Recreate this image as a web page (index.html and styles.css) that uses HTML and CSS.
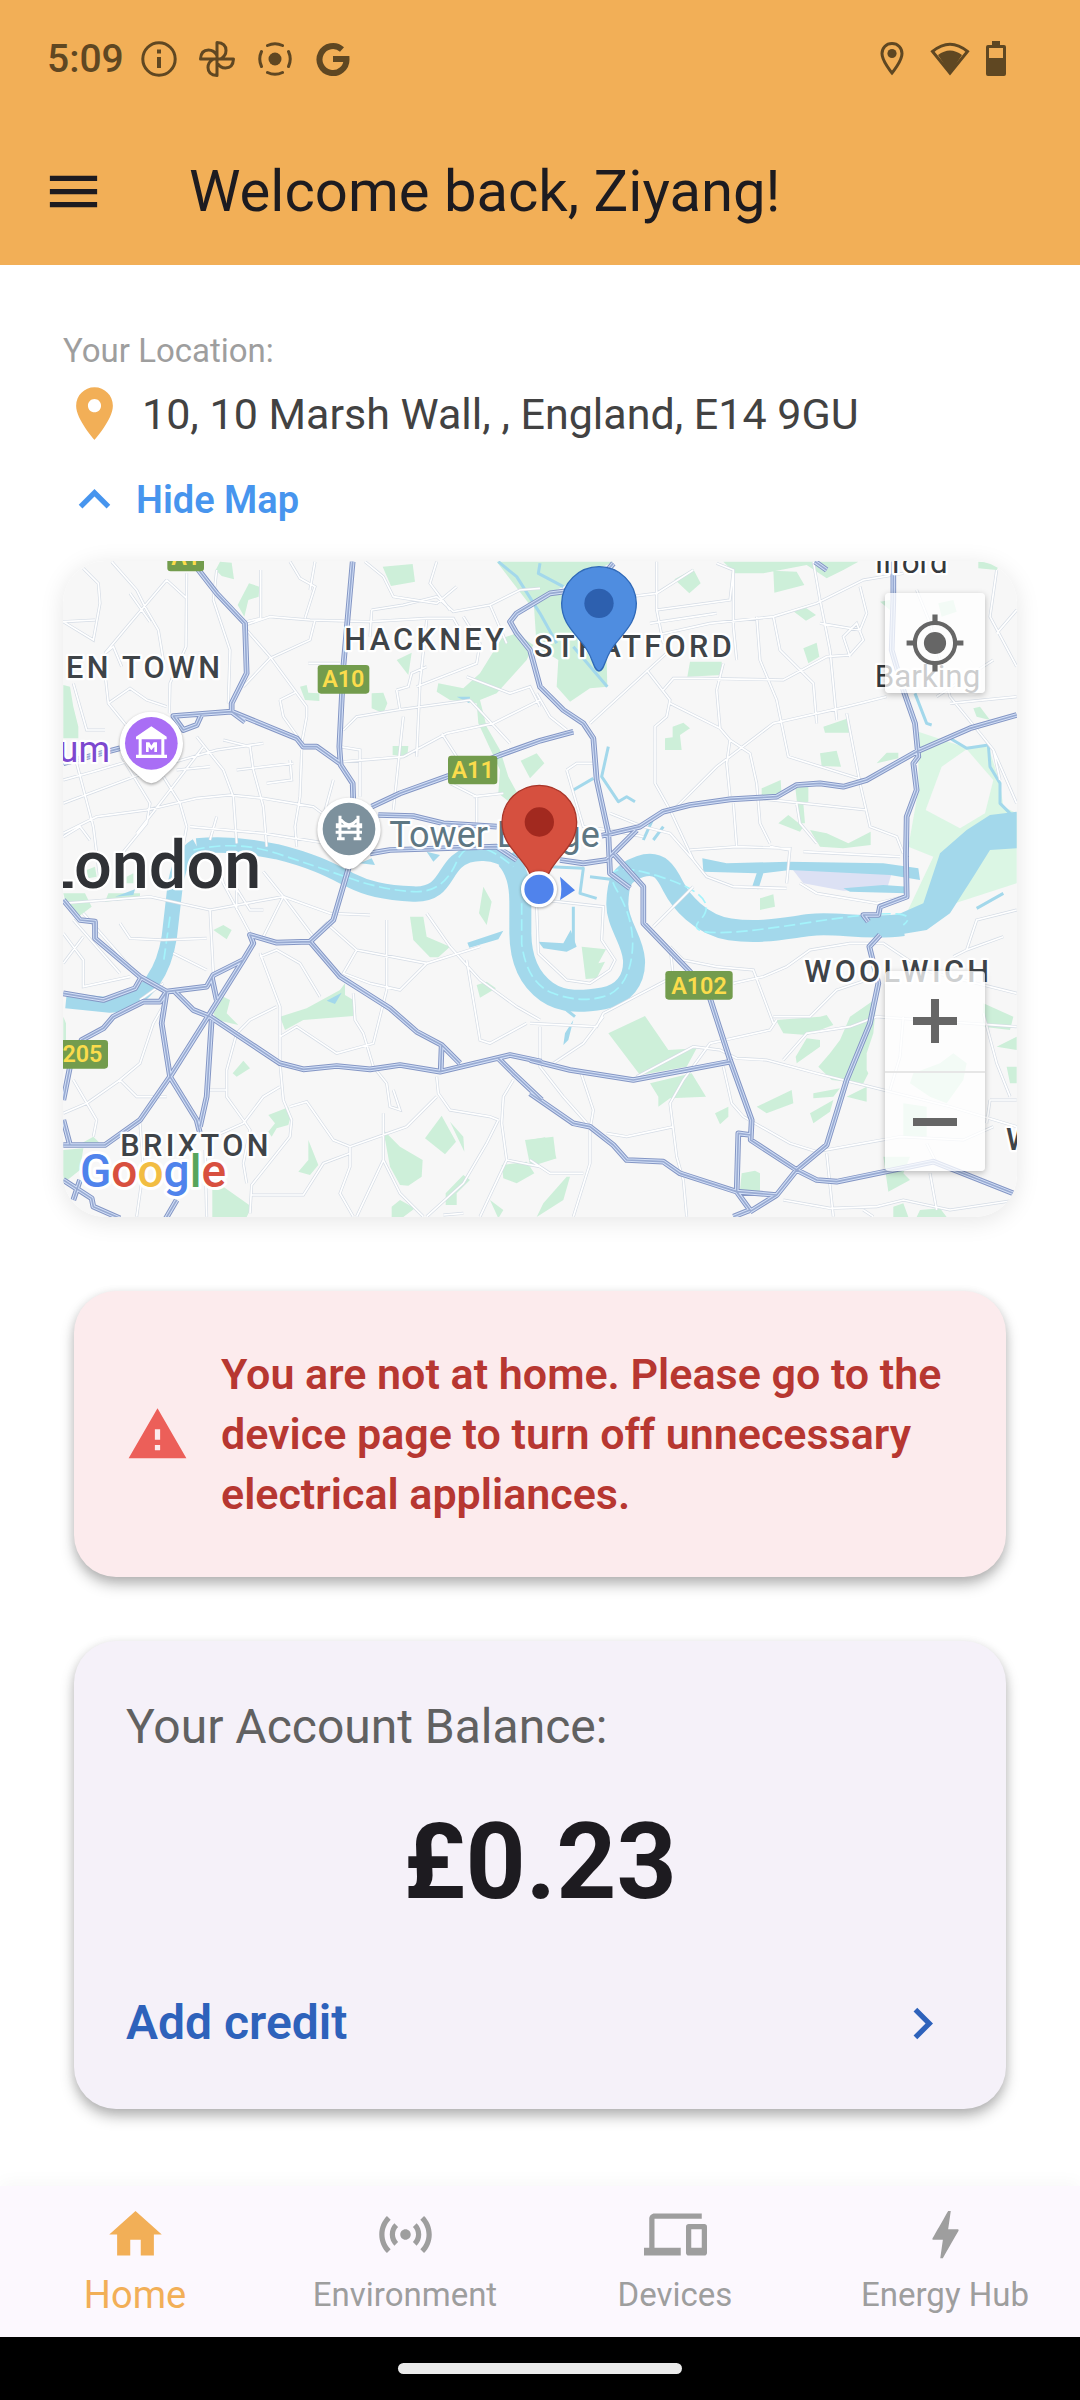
FILE: index.html
```html
<!DOCTYPE html>
<html lang="en">
<head>
<meta charset="utf-8">
<meta name="viewport" content="width=device-width, initial-scale=1">
<title>Home</title>
<link rel="stylesheet" href="styles.css">
</head>
<body>
<div class="app">
  <header class="header">
    <div class="status">
      <span class="clock">5:09</span>
      <div class="status-left">
        <svg width="36" height="36" viewBox="0 0 36 36" aria-hidden="true"><circle cx="18" cy="18" r="16.2" fill="none" stroke="currentColor" stroke-width="3"/><path d="M16 8.500h4v4h-4zM16 16h4v11h-4z" fill="currentColor"/></svg>
        <svg width="36" height="36" viewBox="0 0 36 36" fill="none" stroke="currentColor" stroke-width="3" stroke-linejoin="round" aria-hidden="true"><path d="M18 18V1.500Q27 2 27 9.500Q27 15 21.500 18M18 18h16.500Q34 27 26.500 27Q21 27 18 21.500M18 18v16.500Q9 34 9 26.500Q9 21 14.500 18M18 18H1.500Q2 9 9.500 9Q15 9 18 14.500"/></svg>
        <svg width="36" height="36" viewBox="0 0 36 36" aria-hidden="true"><circle cx="18" cy="18" r="6.500" fill="currentColor"/><g fill="none" stroke="currentColor" stroke-width="3" stroke-linecap="round"><path d="M10.500 4.500Q18 1 25.500 4.500M10.500 31.500Q18 35 25.500 31.500M4.500 10.500Q1 18 4.500 25.500M31.500 10.500Q35 18 31.500 25.500"/></g></svg>
        <svg width="36" height="36" viewBox="0 0 36 36" aria-hidden="true"><path d="M27 8.500A13.500 13.500 0 1 0 31.500 18H18" fill="none" stroke="currentColor" stroke-width="6"/></svg>
      </div>
      <div class="status-right">
        <svg class="status-pin" width="24" height="36" viewBox="0 0 24 36" aria-hidden="true"><path d="M12 2.500c-6 0-10 4.500-10 10C2 20 12 32 12 32s10-12 10-19.500c0-5.500-4-10-10-10z" fill="none" stroke="currentColor" stroke-width="3"/><circle cx="12" cy="12.500" r="4.600" fill="currentColor"/></svg>
        <svg width="40" height="36" viewBox="0 0 40 36" aria-hidden="true"><path d="M2.500 10.500Q20-4 37.500 10.500L20 32z" fill="none" stroke="currentColor" stroke-width="3"/><path d="M8 14Q20 5 32 14L20 32z" fill="currentColor"/></svg>
        <svg width="20" height="36" viewBox="0 0 20 36" aria-hidden="true"><path fill="currentColor" fill-rule="evenodd" d="M6 0h8v4h4q2 0 2 2v27q0 2-2 2H2q-2 0-2-2V6q0-2 2-2h4zM3 7v10h14V7z"/></svg>
      </div>
    </div>
    <div class="appbar">
      <button class="icon-button" type="button" aria-label="Menu"><svg class="icon" viewBox="0 0 24 24"><path d="M3 18h18v-2H3v2zm0-5h18v-2H3v2zm0-7v2h18V6H3z"/></svg></button>
      <h1 class="title">Welcome back, Ziyang!</h1>
    </div>
  </header>

  <main class="content">
    <section class="location">
      <p class="caption">Your Location:</p>
      <p class="address"><svg class="icon pin" viewBox="0 0 24 24" aria-hidden="true"><path d="M12 2C8.130 2 5 5.130 5 9c0 5.250 7 13 7 13s7-7.750 7-13c0-3.870-3.130-7-7-7zm0 9.500c-1.380 0-2.500-1.120-2.500-2.500s1.120-2.500 2.500-2.500 2.500 1.120 2.500 2.500-1.120 2.500-2.500 2.500z"/></svg>10, 10 Marsh Wall, , England, E14 9GU</p>
      <button class="toggle" type="button"><svg class="icon" viewBox="0 0 24 24" aria-hidden="true"><path d="M12 8l-6 6 1.410 1.410L12 10.830l4.590 4.580L18 14z"/></svg>Hide Map</button>
      <div class="map">
        <svg class="map-art" viewBox="39 33 2862 1968" role="img" aria-label="Map of London">
          <defs>
            <g id="minor">
              <path d="M185 35L260 120L290 180L325 240L340 330M100 55L145 100L150 160L130 270L40 215L135 210M350 90L240 220L165 310L190 290L215 350M350 90L410 145M410 70L408 290L360 400L358 490M240 130L300 215M500 60L490 150L540 300L535 460M632 60V205L590 215M585 225L660 200L780 210L960 215L1130 205L1210 205L1230 240M590 240L660 320L770 470L770 500L755 580M795 210L780 270L660 325L580 410M720 35L750 85L795 110L765 205M795 35L780 120M165 370L175 460L240 540M175 460L240 415L290 450L350 470M70 400L110 540L165 540M690 450L700 500L750 570M775 340H870M690 450L740 425M40 760L200 700L360 640L500 600L640 580M40 690L130 665L215 640L290 610M40 850L140 800L290 780L440 745L540 735L640 745L790 770L830 800M80 640L130 830L150 990M215 620L300 760L290 820L200 930M340 680L390 760L410 830L390 940M440 560L520 660L550 740L560 880M520 570L600 590L610 660L640 770L650 890M460 590L330 760L260 850M380 660L480 650M720 630L725 690L650 700M755 600L750 740L735 830L740 890M40 860L90 830L120 870M420 830L640 850L830 880M500 800L480 870M560 660L730 640M850 690L820 800M880 635L1060 620L1190 550L1330 520L1470 450M880 540L920 500L1040 480L1260 450M965 180L1060 165L1160 140L1210 185L1320 165L1410 120L1470 115M965 180L960 260M945 35L1000 80L1030 140L1160 160L1220 110M1160 35L1140 100L1200 180M1320 165L1370 280M1130 210L1110 400L1100 620M1240 200L1290 280L1280 340L1100 410M1040 420L1075 410L1085 370L1130 350M1040 420L1050 480M870 590L930 600L930 740M1060 500L1030 780M1175 550L1220 620M1250 380L1380 430L1440 410L1470 470M1260 450L1380 580M1200 700L1280 740L1280 820M1270 740L1360 730M640 965L700 1040L640 1160M40 1060L300 1040L480 1080L700 1040L840 1090L960 1095"/>
              <path d="M40 1150L100 1230L100 1310L240 1280M70 1110L210 1270M100 1090L240 1250M40 1240L100 1160M210 1120L240 1165L340 1170L470 1165M480 1080L490 1270M370 1210L470 1260M350 1350L310 1420L270 1540L210 1590L110 1660L40 1690M270 1350L340 1300M630 1210L690 1370L690 1540L700 1650L725 1710L720 1760L605 1905L600 1990M630 1220L680 1200L750 1240L810 1340M700 1040L790 1160L830 1120L920 1200L1130 1240L1290 1190M920 1200L880 1270L960 1300L1050 1320L1130 1240M1130 1090L1200 1190L1290 1290L1400 1370L1470 1410M1250 1230L1290 1470L1320 1480L1430 1420M1010 1110L1010 1320L970 1480L860 1510L830 1490L740 1430L690 1460M910 1330L915 1410L940 1450L970 1550L1010 1600L1020 1670L1050 1680L1030 1620M1160 1580L1165 1630L1200 1680L1320 1700L1345 1710M1160 1640L1070 1730L900 1790L850 1770L770 1655L720 1670M900 1790L900 1850L870 1930L910 2000M900 1810L820 1840L760 1935L605 1935M680 1370L600 1410L560 1450L530 1560L530 1640L580 1710L600 1740L580 1840L590 1900M690 1610L640 1640L580 1720L490 1760M480 1620H530M70 1590L140 1710L130 1760M210 1590L260 1640L350 1640M270 1720L280 1860L260 2000M1000 1690L1000 1830L920 2000M1000 1830L1050 1930L1120 2000M1390 1590L1360 1640L1355 1720L1370 1830L1290 2000M1345 1710L1310 1780L1240 1900L1130 2000M1370 1830L1470 1850M500 930L520 1000L600 1150M560 960V1080M550 1000L600 1080L640 1080M465 1800L470 2000M1240 1990L1180 1995"/>
              <path d="M1820 35L1820 180L1840 280M1820 180L2040 150L2050 60L2000 40M1740 140L1820 130L1930 60M2050 60L2050 230L2060 330M1800 260L1980 220L2170 200L2300 160L2440 90L2560 70M1800 220L2000 190M2290 35L2310 150L2340 300L2360 510M2120 200L2130 330L2180 450L2215 620L2440 690M2170 200L2190 300L2290 400L2300 520M1840 420L1870 385H1950L2200 390L2330 320L2400 315L2440 270L2420 220L2380 260L2400 320M1790 360L1860 450L1850 500L1815 530L1815 700L1860 780L1930 930L1970 980L2050 1010L2210 1015M1860 460L2010 535L2000 420L2020 340M2010 535L2040 570L2100 610L2120 700L2130 820L2160 880M1620 520L1860 300M2390 490L2430 700L2460 830L2540 860L2560 910M1870 780L2000 650L2170 520L2390 470L2510 440M2040 570L2030 640L2040 740M1550 660L1580 640L1640 640M1550 660L1600 830L1680 840L1780 860M1680 790L1780 830L1860 850L1930 930M2050 760L2060 890M2120 745L2450 780M2240 760L2250 820L2300 880M1920 900L2060 890L2220 895L2210 1000M2260 905L2550 920M2160 890L2220 900M2310 220L2430 240L2450 190L2430 110M2600 120L2640 220L2700 440L2790 550L2830 600L2900 760M2700 460L2900 440M2830 600L2850 690M2840 60L2820 200L2900 350M2660 440L2830 330M2840 250L2900 180M1460 430L1500 500L1550 540"/>
              <path d="M1460 1070L1465 1210L1550 1290L1620 1300L1680 1260L1695 1230L1655 1170L1660 1070L1480 1050M1810 1130L1930 1010M1860 1190L1900 1230L2000 1250L2110 1260L2170 1420M1860 1190L1870 1280L1660 1390L1640 1430L1440 1420M2050 1300L2140 1280L2210 1250L2280 1200L2400 1180L2500 1180L2620 1260L2900 1330M2170 1400H2280L2360 1320L2450 1290M2200 1530L2270 1450L2400 1430L2480 1400L2900 1430M2180 1410L2160 1440L1980 1480L1900 1590L1860 1660L1880 1820L1900 1890L1910 2000M1760 1580L1930 1490L2010 1500L2060 1525L2150 1530L2300 1570L2500 1620L2700 1670L2900 1730M2020 1550L2045 1660L2080 1700L2220 1780L2300 1805L2550 1760L2740 1770L2830 1730M2330 1810L2350 2000M2200 1950L2340 1975L2480 1970L2560 1950L2700 1980L2900 1950M2640 1870L2660 1980M1470 1430V1550L1540 1640L1620 1730L1620 1840L1570 2000M1510 1540L1600 1480L1660 1400M1590 1560L1630 1680L1620 1740M1670 1750L1730 1760L1870 1730M1440 1830L1500 1870H1600M2250 1000L2300 1030L2480 1060L2560 1040M2710 1220L2750 1200L2780 1110L2900 1080M2750 1200L2860 1160M2800 1390L2840 1540L2880 1640M2820 1650H2900M2820 1650L2810 1720M2560 1400L2550 1520L2520 1620M2630 1780L2660 1840M2440 1980L2470 2000"/>
            </g>
            <g id="major">
              <path d="M430 40L500 130L585 220L590 370L545 460V485L370 498L400 540L440 525L455 492M545 485L585 515M545 485L740 565L760 590L800 590L870 640M908 35L880 350L868 590L872 645L908 700L910 760M965 770L1050 730L1195 678L1350 615L1470 572L1570 545M985 795L1090 798L1180 820L1340 830M960 910L1020 900L1340 890L1400 930M1690 40L1640 100L1540 125L1500 130L1400 190L1380 215L1400 250L1440 300L1470 410L1540 480L1600 520L1630 565L1640 690L1675 850L1680 970L1740 1015M1655 857L1770 830L1840 785L1920 765L2040 748L2180 740L2240 705L2310 700L2380 710L2450 690L2600 605L2760 535L2900 495M1530 930L1600 940L1670 930L1760 840M1690 910L1780 1010V1120L1920 1265L1980 1345L2040 1530L2105 1710L2102 1770L2240 1860L2300 1890L2360 1895L2650 1835L2890 1930M2530 35V150L2525 300L2560 420L2595 520L2605 620L2590 640L2600 720L2570 800L2568 920L2570 1040L2490 1070L2485 1095L2440 1095L2455 1115M2295 35L2330 60M2490 1155L2458 1190L2485 1300L2460 1420L2390 1590L2330 1785L2240 1860L2180 1935L2060 1925L1890 1870L1840 1835L1730 1830L1690 1785L1620 1730L1570 1720L1440 1630M1440 1530L1560 1560L1750 1590L2040 1535M2060 1925L2065 1750L2102 1755M2060 1925L2100 1980L2050 2000M2100 1985L2180 1935"/>
              <path d="M40 1050L90 1110L135 1115V1165L270 1280L350 1325L470 1310L490 1275L580 1230L610 1180L600 1155L680 1178L780 1175L850 1110L897 950M40 1330L160 1350L255 1315L275 1280M350 1325L330 1355L280 1355L190 1400L160 1435L95 1470L60 1550L40 1650M350 1325L335 1420L360 1580L440 1710L450 1750M375 1325L430 1380L480 1400L690 1540L760 1558L860 1548L960 1558L1050 1545L1170 1565L1380 1515L1475 1535M580 1230L480 1390L360 1580L270 1710L165 1785H40M485 1280L500 1350M485 1410L470 1640L450 1730M780 1175L870 1280L1020 1375L1100 1445L1175 1485L1230 1540M1175 1485L1172 1565M1345 1525L1390 1570L1475 1650M40 1710L60 1785M40 1890L125 1945L130 1970L210 2005M70 1950L90 1890M380 1950L345 2010M40 640L210 595"/>
            </g>
          </defs>
          <rect class="land" x="39" y="33" width="2862" height="1968"/>
          <g class="park">
            <path d="M497 60L510 35L545 38L552 88L515 78zM597 100L628 110L626 140L595 150L583 200L563 165zM998 50L1088 42L1095 95L1023 108zM1340 35H1690L1640 60L1560 100L1500 130L1440 165zM1355 265L1400 250L1450 285L1430 330L1340 430L1290 450L1310 530L1350 600L1375 680L1405 735L1390 765L1345 730L1350 660L1285 520L1280 460L1200 450L1160 425L1165 400L1240 415L1290 370zM750 410L770 405L775 428L808 430V453L765 450zM965 430L1000 428L1012 460L1000 490L965 475zM1028 588H1075L1072 620L1028 615zM1412 632L1460 610L1483 640L1440 685zM40 405L60 410L70 470L85 530V565H40zM1040 330L1085 308L1075 375zM110 960L135 950L140 980L115 985zM230 980L250 970V1000H230z"/>
            <path d="M1450 140L1530 120L1670 330L1672 410L1620 415L1560 455L1520 410L1525 330L1460 290zM1873 88L1930 58L1952 100L1918 130zM2020 35H2425L2380 60L2330 85L2270 45L2140 70H2055zM2170 62L2240 65L2263 105L2173 128zM2232 185L2260 168L2298 195L2268 212zM2260 295L2300 278L2308 320L2275 340zM1920 335H2015V375L1912 380zM1868 530L1900 518L1920 535L1890 555L1895 600H1845V565L1868 562zM2310 610L2360 602L2373 650L2315 648zM2320 530L2395 505L2400 548H2325zM2135 715L2192 690L2195 740H2135zM2235 705H2275V755L2260 760L2265 820H2248zM2185 820L2215 795L2260 830L2250 845zM2280 840L2330 850L2395 880L2462 845V885L2380 895L2310 890zM2480 640L2510 608H2545V625zM2785 35L2850 40L2840 60L2785 55zM2770 475L2790 470L2820 510L2780 500zM2490 155L2520 150V180zM2665 160L2710 150L2720 185L2675 200z"/>
            <path d="M40 1030H105L125 1070L85 1100L50 1070zM175 1030H270V1045L165 1055zM490 1140L520 1125L545 1140L530 1168zM1080 1100H1120L1130 1160L1200 1190L1165 1222L1140 1222L1090 1170zM1300 1010L1325 1055L1310 1125L1287 1090zM1280 1305L1310 1295L1338 1315L1290 1343zM690 1400L770 1375L870 1320L885 1300V1335L910 1350V1398L760 1410L705 1440zM520 1340L540 1350L530 1390L565 1425L500 1410L490 1390zM548 1570L580 1532L600 1555L560 1580zM655 1695L715 1672L722 1700L715 1725L680 1735L665 1760L655 1745L675 1720zM775 1770L805 1845L780 1875L745 1865L775 1830zM1000 1740L1050 1790L1118 1830L1115 1880L1075 1907L1050 1905L1020 1850zM1175 1697L1218 1775L1185 1813L1125 1765zM1200 1715L1240 1760L1243 1805zM1240 1875L1260 1890L1220 1930V1965H1187V1930zM1355 1845L1430 1835L1453 1870L1400 1900L1360 1885zM1320 1950L1360 1980L1345 2005zM1025 1970L1050 1950L1095 1975L1060 2001H1025zM487 1915L520 1910L605 1970L590 2001H487zM40 1800L100 1795L90 1860L40 1900zM40 1400L48 1420V1470H40zM95 1780L130 1760L150 1780zM1425 1770L1510 1760L1518 1825L1440 1845z"/>
            <path d="M1595 1190L1668 1198L1645 1240L1665 1235L1640 1285L1607 1287zM1675 1450L1785 1398L1855 1500L1940 1495L1910 1550L1770 1575zM1800 1600L1925 1570L1968 1640L1860 1645L1825 1670V1640zM2130 1045L2170 1033L2175 1070L2130 1080zM2178 1410L2310 1400L2330 1395L2350 1425L2270 1455L2200 1450zM2400 1400L2480 1345L2470 1450L2450 1510V1560L2455 1570L2440 1600L2345 1590L2305 1550L2340 1510L2370 1470zM2270 1465L2310 1470V1490L2240 1540L2237 1520zM2120 1670L2225 1620L2230 1660L2150 1690zM1995 1690L2035 1670V1700L2010 1723zM2075 1870L2115 1862L2130 1870V1925L2070 1920zM2290 1630L2370 1615L2350 1640L2290 1645zM2280 1690L2350 1650L2340 1685L2290 1720zM2390 1640L2450 1610V1655zM2670 1540L2710 1510L2750 1540L2740 1590L2690 1660L2640 1640L2580 1600L2590 1570zM2560 1660L2630 1670V1760H2560zM2500 1820H2580L2560 1870L2580 1890L2515 1925zM2800 1360L2890 1400L2880 1440L2800 1430zM2870 1550H2900V1600H2880zM2840 1490L2900 1460V1500zM1440 1770L1485 1762L1520 1825L1440 1850zM2530 1970L2560 1960L2575 2001H2530zM2610 1980L2670 1975L2690 2001H2600zM1550 1880H1560L1540 1950L1460 2001L1480 1960z"/>
          </g>
          <path class="marsh" d="M2605 545L2740 590H2815L2850 700L2860 770L2900 790V1000L2560 1110L2650 920L2575 890L2605 720z"/>
          <path class="land" d="M2675 650L2750 598L2830 690L2805 790L2730 835L2627 780z"/>
          <path class="industrial" d="M2225 955L2525 970L2510 1020L2380 1022L2260 1000z"/>
          <g class="water">
            <path d="M2670 910L2750 840L2820 795L2900 785V895L2820 900L2770 980L2700 1090L2630 1140L2540 1155V1095L2620 1060zM1957 925L2030 940L2215 935L2500 940L2605 955L2610 990L2520 975L2220 960L2140 970L2125 1018L2105 1015L2120 970L1960 965zM2380 1015L2500 1005L2575 1010L2570 1030L2400 1025zM1252 1178L1360 1142L1345 1168L1258 1193zM1220 440H1260L1258 460zM830 1352L875 1328L855 1362zM195 1040L255 1018L250 1035zM1130 905L1170 915L1150 935zM930 940L965 925L975 945zM1465 1175L1540 1180L1562 1140L1580 1190L1550 1205L1480 1195zM1545 1450L1570 1410L1555 1470L1540 1485z"/>
            <g class="channel">
              <path class="river" d="M440 888C520 880 600 888 680 905C800 935 850 965 900 990S1000 1028 1090 1032S1180 970 1220 935S1340 900 1390 945"/>
              <path class="river bend" d="M1370 925Q1412 970 1411 1060V1150C1412 1230 1440 1290 1490 1325S1600 1355 1660 1345S1755 1290 1752 1230S1700 1120 1702 1060S1710 970 1770 950S1850 970 1870 1010S1950 1125 2040 1138S2200 1135 2280 1125S2440 1140 2560 1125"/>
              <path class="river" d="M440 888Q385 920 374 1020L358 1160Q345 1240 310 1290Q260 1365 180 1365L48 1352"/>
              <path class="canal" d="M1345 35L1400 80L1470 190L1520 280M1470 40L1465 70L1540 110M1570 290L1672 410M2595 430L2630 520L2645 525M2700 565L2750 595L2815 585L2820 650L2850 700V760L2890 800M1675 590L1655 680L1705 755L1730 740L1755 755M1570 720L1630 685M1780 870L1808 808M1810 870L1840 830M1500 950L1600 955L1590 1030L1640 1045M1570 1070V1180M1550 1380L1575 1400M2780 1075L2860 1030M1620 980L1700 990"/>
            </g>
          </g>
          <path class="ferry" d="M430 900Q560 870 680 910T900 985T1090 1025T1220 935T1390 950M1415 1060V1180Q1430 1300 1510 1330T1660 1340T1745 1220T1700 1020T1830 980T1950 1110T2260 1120T2560 1125M360 1100L340 1240"/>
          <use href="#minor" class="minor-edge"/><use href="#minor" class="minor-fill"/>
          <use href="#major" class="major-edge"/><use href="#major" class="major-fill"/><use href="#major" class="major-line"/>

          <g class="shield">
            <rect x="352" y="-22" width="110" height="86" rx="10"/><rect x="803" y="345" width="155" height="86" rx="10"/><rect x="1194" y="617" width="148" height="86" rx="10"/><rect x="1846" y="1263" width="202" height="86" rx="10"/><rect x="0" y="1470" width="174" height="86" rx="10"/>
          </g>
          <g class="shield-text">
            <text x="407" y="45">A1</text><text x="880" y="412">A10</text><text x="1268" y="684">A11</text><text x="1947" y="1331">A102</text><text x="74" y="1537">A205</text>
          </g>
          <g class="place">
            <text x="48" y="384">EN TOWN</text><text x="883" y="299">HACKNEY</text><text x="1452" y="320">STRATFORD</text><text x="2263" y="1297">WOOLWICH</text><text x="211" y="1817">BRIXTON</text><text x="2868" y="1800">W</text>
          </g>
          <g class="town"><text x="2474" y="68">Ilford</text><text x="2474" y="410">Barking</text></g>
          <text class="city" x="634" y="1014">London</text>
          <text class="museum" x="180" y="635">Museum</text>
          <text class="bridge" x="1018" y="892">Tower Bridge</text>

          <g class="poi">
            <path class="poi-body" d="M304 485A95 95 0 0 0 209 580C209 628 240 655 280 690Q304 710 328 690C368 655 399 628 399 580A95 95 0 0 0 304 485z"/>
            <circle cx="304" cy="580" r="79" fill="#a96ef5"/>
            <path fill="#fff" fill-rule="evenodd" d="M304 529L350 560V568H343V614H351V624H258V614H266V568H258V560zM275 568V614H334V568zM288 606V577H298L304 587L311 577H321V606H313V590L304 601L296 590V606z"/>
            <path class="poi-body" d="M897 743A95 95 0 0 0 802 838C802 886 833 913 873 948Q897 968 921 948C961 913 992 886 992 838A95 95 0 0 0 897 743z"/>
            <circle cx="897" cy="837" r="79" fill="#7d919d"/>
            <path d="M870 797V865M924 797V865M861 866H884M911 866H934M857 847H936M870 806Q897 842 924 806M897 825V838M862 820V835M932 820V835M870 828H924" fill="none" stroke="#fff" stroke-width="9"/>
          </g>
          <g transform="translate(1647 160)"><path d="M0-110A112 112 0 0 0-112 0C-112 65-66 92-36 140C-16 172-15 203 0 203S16 172 36 140C66 92 112 65 112 0A112 112 0 0 0 0-110z" fill="#4f8de0" stroke="#2f69b8" stroke-width="4"/><circle r="44" fill="#2d60af"/></g>
          <g transform="translate(1468 816)"><path d="M0-110A112 112 0 0 0-112 0C-112 65-66 92-36 140C-16 172-15 203 0 203S16 172 36 140C66 92 112 65 112 0A112 112 0 0 0 0-110z" fill="#d6503f" stroke="#a8362a" stroke-width="4"/><circle r="44" fill="#a2291f"/></g>
          <path d="M1530 980L1575 1021L1530 1050Q1538 1020 1530 980z" fill="#5083ec"/>
          <circle class="me" cx="1467" cy="1018" r="49"/>
          <text class="brand" x="90" y="1910"><tspan fill="#4f83ec">G</tspan><tspan fill="#d8503f">o</tspan><tspan fill="#f2bd42">o</tspan><tspan fill="#4f83ec">g</tspan><tspan fill="#58a55c">l</tspan><tspan fill="#d8503f">e</tspan></text>
        </svg>
        <button class="map-button locate" type="button" aria-label="My location"><svg viewBox="0 0 24 24" width="62" height="62"><path fill="currentColor" d="M11 1h2v4h-2zM11 19h2v4h-2zM1 11h4v2H1zM19 11h4v2h-4z"/><circle cx="12" cy="12" r="7.800" fill="none" stroke="currentColor" stroke-width="1.600"/><circle cx="12" cy="12" r="4.300" fill="currentColor"/></svg></button>
        <div class="zoom">
          <button class="zoom-button" type="button" aria-label="Zoom in"><svg viewBox="0 0 44 44" width="44" height="44"><path fill="currentColor" d="M18 0h8v18h18v8H26v18h-8V26H0v-8h18z"/></svg></button>
          <button class="zoom-button" type="button" aria-label="Zoom out"><svg viewBox="0 0 44 44" width="44" height="44"><path fill="currentColor" d="M0 18h44v8H0z"/></svg></button>
        </div>
      </div>
    </section>

    <section class="card alert" role="alert">
      <svg class="icon" viewBox="0 0 24 24" aria-hidden="true"><path d="M1 21h22L12 2 1 21zm12-3h-2v-2h2v2zm0-4h-2v-4h2v4z"/></svg>
      <p>You are not at home. Please go to the device page to turn off unnecessary electrical appliances.</p>
    </section>

    <section class="card balance">
      <h2 class="balance-title">Your Account Balance:</h2>
      <p class="amount">£0.23</p>
      <a class="credit" href="#credit">Add credit<svg class="icon" viewBox="0 0 24 24" aria-hidden="true"><path d="M10 6L8.590 7.410 13.170 12l-4.580 4.590L10 18l6-6z"/></svg></a>
    </section>
  </main>

  <nav class="nav">
    <a class="tab active" href="#home" aria-current="page"><svg class="icon" viewBox="0 0 24 24" aria-hidden="true"><path d="M10 20v-6h4v6h5v-8h3L12 3 2 12h3v8z"/></svg>Home</a>
    <a class="tab" href="#environment"><svg class="icon" viewBox="0 0 24 24" aria-hidden="true"><path d="M7.760 16.240C6.670 15.160 6 13.660 6 12s.67-3.160 1.760-4.240l1.420 1.420C8.450 9.900 8 10.900 8 12c0 1.100.45 2.100 1.170 2.830l-1.410 1.410zm8.480 0C17.330 15.160 18 13.660 18 12s-.67-3.160-1.760-4.240l-1.420 1.420C15.550 9.900 16 10.900 16 12c0 1.100-.45 2.100-1.170 2.830l1.410 1.410zM12 10c-1.100 0-2 .9-2 2s.9 2 2 2 2-.9 2-2-.9-2-2-2zm8 2c0 2.210-.9 4.210-2.350 5.650l1.420 1.420C20.880 17.260 22 14.760 22 12s-1.120-5.260-2.930-7.070l-1.420 1.420C19.100 7.790 20 9.790 20 12zM6.350 6.350L4.930 4.930C3.120 6.740 2 9.240 2 12s1.120 5.260 2.930 7.070l1.420-1.420C4.900 16.210 4 14.210 4 12s.9-4.210 2.350-5.650z"/></svg>Environment</a>
    <a class="tab" href="#devices"><svg class="icon" viewBox="0 0 24 24" aria-hidden="true"><path d="M4 6h18V4H4c-1.100 0-2 .9-2 2v11H0v3h14v-3H4V6zm19 2h-6c-.55 0-1 .45-1 1v10c0 .55.45 1 1 1h6c.55 0 1-.45 1-1V9c0-.55-.45-1-1-1zm-1 9h-4v-7h4v7z"/></svg>Devices</a>
    <a class="tab" href="#energy"><svg class="icon" viewBox="0 0 24 24" aria-hidden="true"><path d="M11 21h-1l1-7H7.500c-.88 0-.33-.75-.31-.78C8.480 10.940 10.420 7.540 13.010 3h1l-1 7h3.510c.4 0 .62.19.4.66C12.970 17.550 11 21 11 21z"/></svg>Energy Hub</a>
  </nav>
  <div class="gesture"><span class="handle"></span></div>
</div>
</body>
</html>
```
FILE: styles.css
```css
* { box-sizing: border-box; }
body, h1, h2, p { margin: 0; }
body {
  font-family: Roboto, "Liberation Sans", sans-serif;
  font-weight: 400;
  color: #1d1b20;
  background: #fff;
}
button { border: 0; padding: 0; background: none; font: inherit; color: inherit; cursor: pointer; }
a { text-decoration: none; color: inherit; }
svg { display: block; flex: none; }
.icon { width: 63px; height: 63px; fill: currentColor; }

.app { min-height: 100vh; display: flex; flex-direction: column; }

/* Status bar and app bar */
.header { background: #f2af57; }
.status {
  display: flex;
  align-items: center;
  height: 118px;
  padding: 0 74px 0 47px;
  color: #5f4722;
}
.clock { font-size: 39px; line-height: 48px; font-weight: 500; }
.status-left { display: flex; gap: 22px; margin-left: 17px; }
.status-right { display: flex; gap: 16px; margin-left: auto; }
.status-pin { margin-right: 10px; }
.appbar { display: flex; align-items: center; gap: 84px; height: 147px; padding: 0 42px; }
.title { margin-bottom: 2px; font-size: 58px; line-height: 68px; font-weight: 400; }

/* Location */
.content { flex: 1; padding: 62px 74px 76px; }
.location { margin: 0 -11px 74px; }
.caption { font-size: 33px; line-height: 48px; color: #9e9e9e; }
.address {
  display: flex;
  align-items: center;
  gap: 16px;
  margin-top: 7px;
  font-size: 43px;
  line-height: 60px;
  color: #424242;
}
.pin { color: #f2af57; }
.toggle {
  display: flex;
  align-items: center;
  gap: 10px;
  margin: 23px 0 30px;
  font-size: 38px;
  line-height: 48px;
  font-weight: 600;
  color: #4795ee;
}

/* Map */
.map {
  position: relative;
  border-radius: 42px;
  overflow: hidden;
  box-shadow: 0 4px 24px rgba(0, 0, 0, .1);
}
.map-art { width: 100%; height: auto; }
.land { fill: #f7f7f7; }
.park { fill: #cdefd9; }
.marsh { fill: #dbf6e4; }
.industrial { fill: #dce1f4; }
.water { fill: #a3d8eb; }
.channel { fill: none; stroke: #a3d8eb; stroke-linejoin: round; }
.river { stroke-width: 46; }
.bend { stroke-width: 66; }
.canal { stroke-width: 9; }
.ferry { fill: none; stroke: #a4f3fb; stroke-width: 5; stroke-dasharray: 34 14; }
.minor-edge { fill: none; stroke: #d5dce5; stroke-width: 9; }
.minor-fill { fill: none; stroke: #fff; stroke-width: 5; }
.major-edge { fill: none; stroke: #8496c4; stroke-width: 17; stroke-linejoin: round; }
.major-fill { fill: none; stroke: #d3e0f7; stroke-width: 11; stroke-linejoin: round; }
.major-line { fill: none; stroke: #98aad2; stroke-width: 5; stroke-linejoin: round; }
.shield { fill: #739c4d; }
.shield-text { font-size: 70px; font-weight: 600; fill: #fbdc4c; text-anchor: middle; }
.place, .town, .city, .museum, .bridge, .brand {
  stroke: #fff;
  stroke-width: 14px;
  stroke-linejoin: round;
  paint-order: stroke;
}
.place { font-size: 92px; font-weight: 500; letter-spacing: 10px; fill: #3f4448; }
.town { font-size: 94px; fill: #35393d; }
.city { font-size: 200px; font-weight: 500; fill: #303236; text-anchor: end; }
.museum { font-size: 108px; fill: #7d48cf; text-anchor: end; }
.bridge { font-size: 108px; fill: #5e7783; }
.brand { font-size: 138px; font-weight: 500; stroke-width: 18px; }
.poi-body { fill: #fff; filter: drop-shadow(0 4px 5px rgba(0, 0, 0, .35)); }
.me { fill: #5083ec; stroke: #fff; stroke-width: 10; filter: drop-shadow(0 2px 5px rgba(0, 0, 0, .4)); }
.map-button, .zoom {
  position: absolute;
  right: 32px;
  width: 100px;
  background: rgba(255, 255, 255, .75);
  border-radius: 4px;
  box-shadow: 0 2px 6px rgba(0, 0, 0, .25);
  color: #666;
}
.locate { top: 32px; display: grid; place-items: center; height: 100px; }
.zoom { bottom: 46px; }
.zoom-button { display: grid; place-items: center; width: 100%; height: 100px; }
.zoom-button + .zoom-button { border-top: 2px solid #e6e6e6; }

/* Cards */
.card {
  border-radius: 42px;
  box-shadow: 0 8px 14px rgba(0, 0, 0, .25), 0 2px 10px rgba(0, 0, 0, .1);
}
.alert {
  display: flex;
  align-items: center;
  gap: 32px;
  margin-bottom: 64px;
  padding: 53px 52px;
  background: #fcebed;
  color: #ec5f59;
}
.alert p { font-size: 43px; line-height: 60px; font-weight: 600; color: #b73731; }
.balance { display: grid; padding: 52px; background: #f5f1f9; }
.balance-title { font-size: 48px; line-height: 68px; font-weight: 400; color: #616161; }
.amount { margin: 32px 0 56px; font-size: 105px; line-height: 140px; font-weight: 700; text-align: center; }
.credit {
  display: flex;
  align-items: center;
  justify-content: space-between;
  font-size: 48px;
  line-height: 68px;
  font-weight: 600;
  color: #2e62bb;
}

/* Bottom navigation */
.nav {
  display: grid;
  grid-template-columns: repeat(4, 1fr);
  padding: 17px 0 18px;
  background: #fcf8fe;
  box-shadow: 0 -4px 16px rgba(0, 0, 0, .03);
}
.tab {
  display: flex;
  flex-direction: column;
  align-items: center;
  gap: 5px;
  font-size: 33px;
  line-height: 48px;
  color: #9e9e9e;
}
.active { font-size: 38px; color: #f2af57; }
.gesture { display: flex; justify-content: center; align-items: center; height: 63px; background: #000; }
.handle { width: 284px; height: 11px; border-radius: 6px; background: #ebebeb; }
```
